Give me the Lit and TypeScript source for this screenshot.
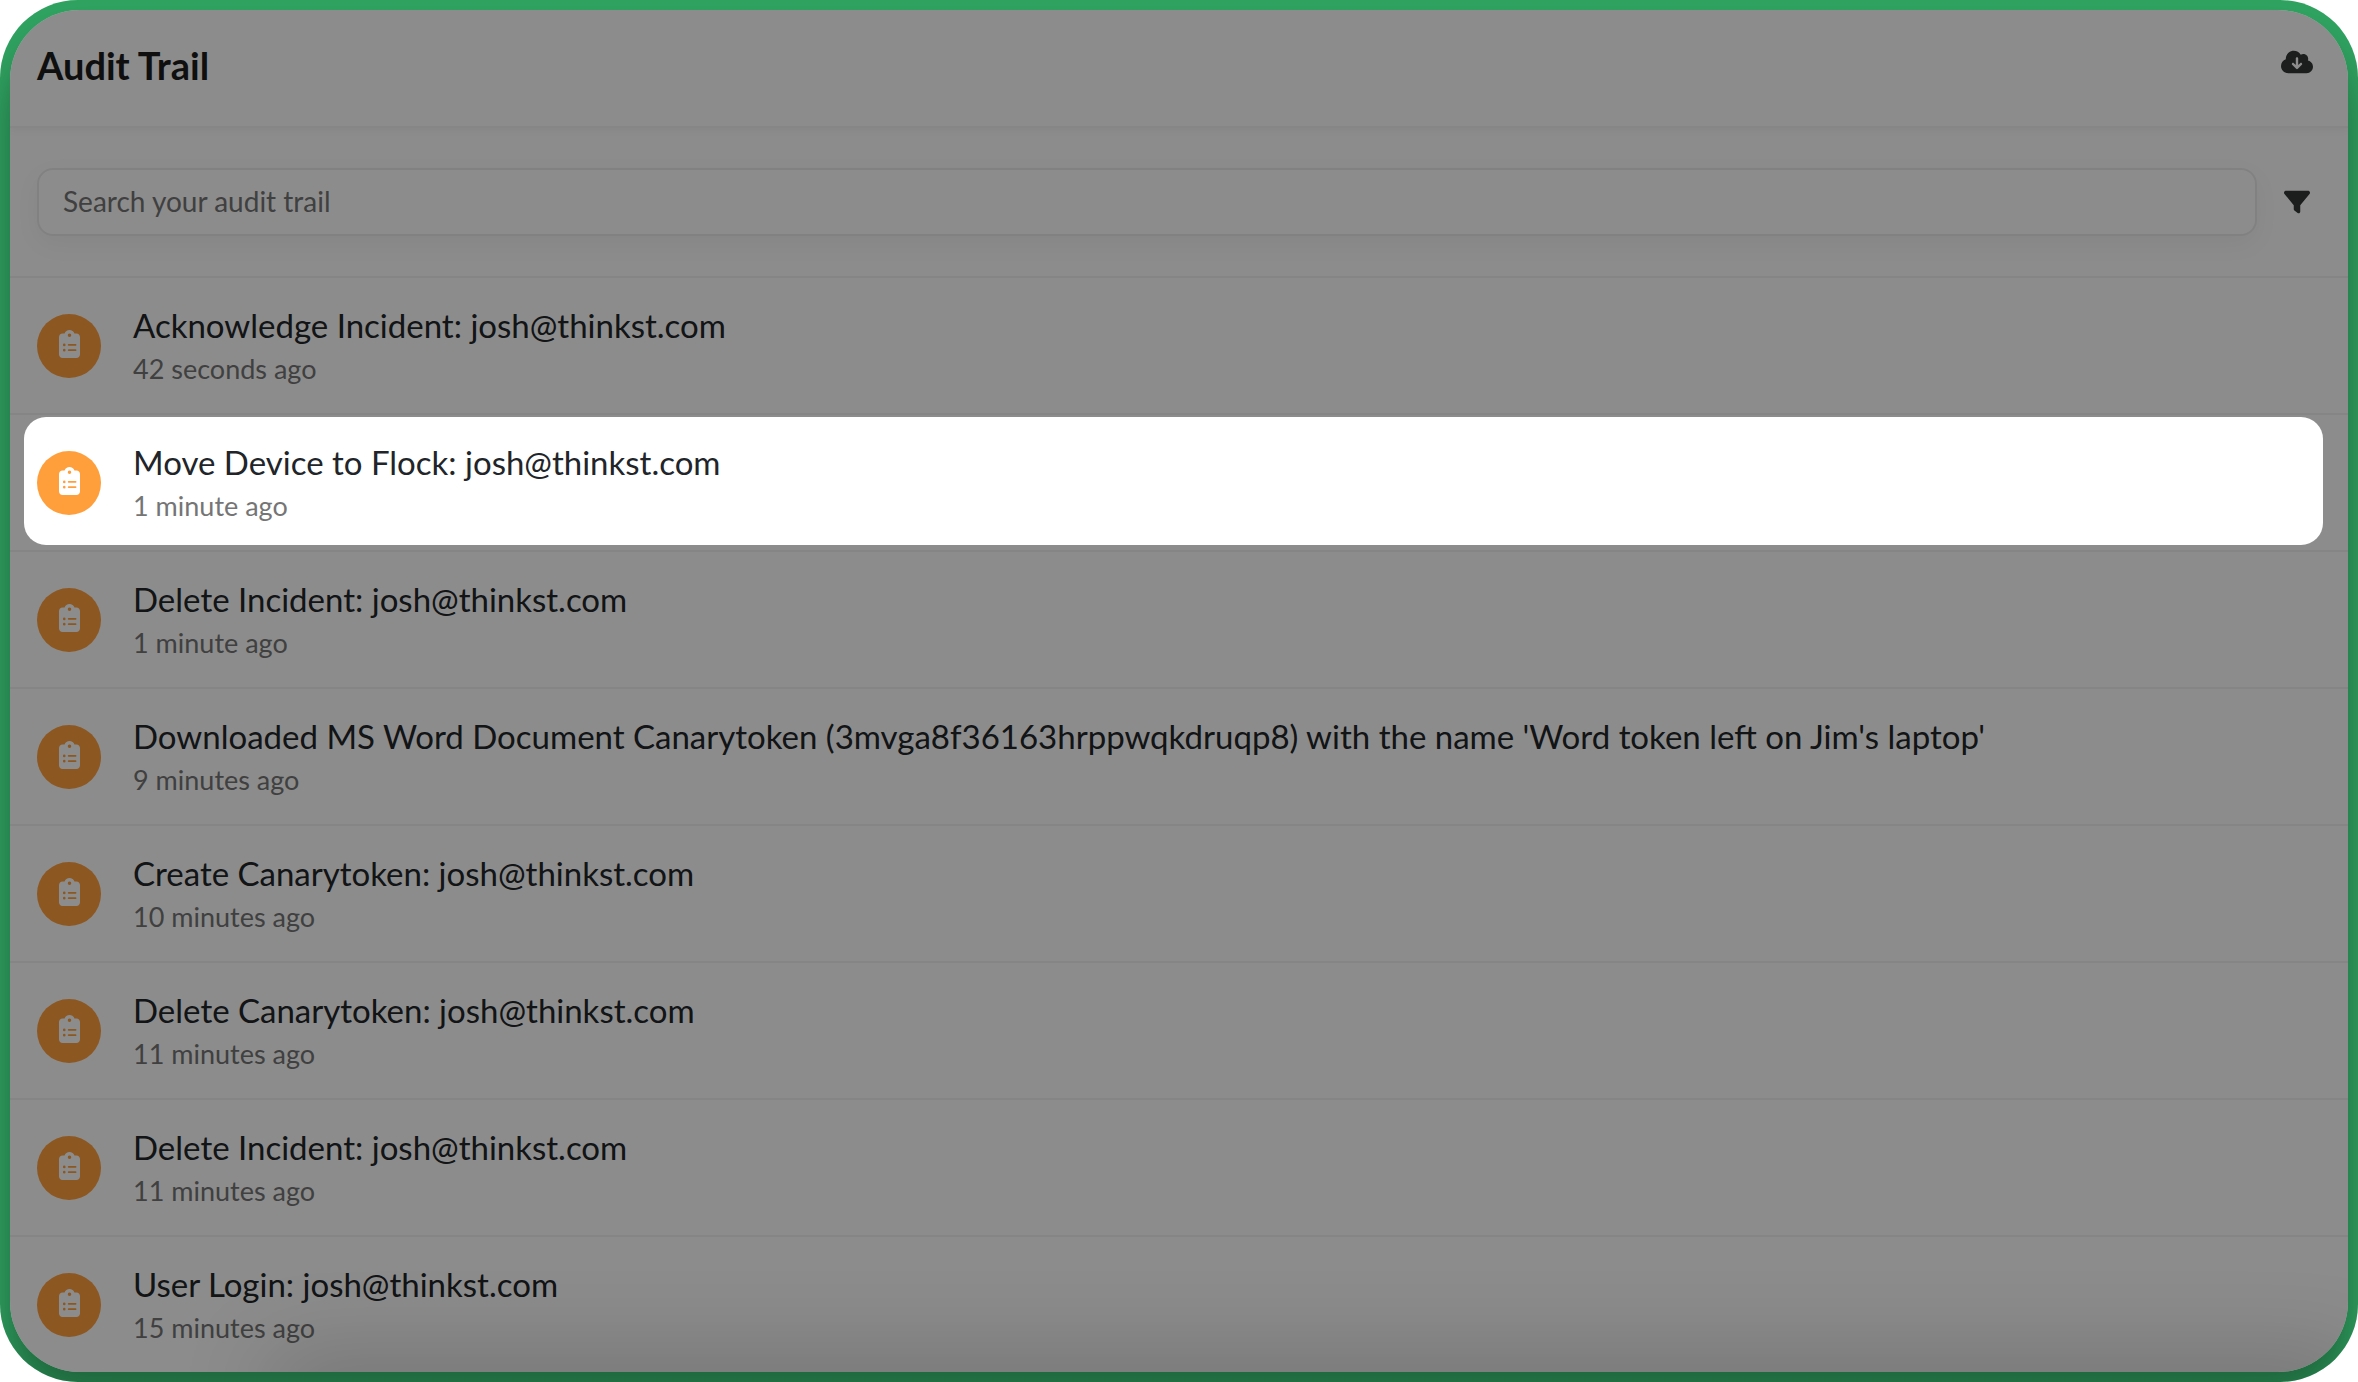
import { LitElement, html, css, svg } from "lit";
import { customElement, property } from "lit/decorators.js";
import { classMap } from "lit/directives/class-map.js";

interface AuditEvent {
  title: string;
  time: string;
  spotlit?: boolean;
}

const EVENTS: AuditEvent[] = [
  { title: "Acknowledge Incident: josh@thinkst.com", time: "42 seconds ago" },
  { title: "Move Device to Flock: josh@thinkst.com", time: "1 minute ago", spotlit: true },
  { title: "Delete Incident: josh@thinkst.com", time: "1 minute ago" },
  {
    title: "Downloaded MS Word Document Canarytoken (3mvga8f36163hrppwqkdruqp8) with the name 'Word token left on Jim's laptop'",
    time: "9 minutes ago",
  },
  { title: "Create Canarytoken: josh@thinkst.com", time: "10 minutes ago" },
  { title: "Delete Canarytoken: josh@thinkst.com", time: "11 minutes ago" },
  { title: "Delete Incident: josh@thinkst.com", time: "11 minutes ago" },
  { title: "User Login: josh@thinkst.com", time: "15 minutes ago" },
];

const cloudPath = svg`<path d="M144 480C64.5 480 0 415.5 0 336c0-62.8 40.2-116.2 96.2-135.9c-.1-2.7-.2-5.4-.2-8.1c0-88.4 71.6-160 160-160c59.3 0 111 32.2 138.7 80.2C409.9 102 428.3 96 448 96c53 0 96 43 96 96c0 12.2-2.3 23.8-6.4 34.6C596 238.4 640 290.1 640 352c0 70.7-57.3 128-128 128H144zm79-167l80 80c9.4 9.4 24.6 9.4 33.9 0l80-80c9.4-9.4 9.4-24.6 0-33.9s-24.6-9.4-33.9 0l-39 39V184c0-13.3-10.7-24-24-24s-24 10.7-24 24V318.1l-39-39c-9.4-9.4-24.6-9.4-33.9 0s-9.4 24.6 0 33.9z"/>`;
const filterPath = svg`<path d="M3.9 54.9C10.5 40.9 24.5 32 40 32H472c15.5 0 29.5 8.9 36.1 22.9s4.6 30.5-5.2 42.5L320 320.9V448c0 12.1-6.8 23.2-17.7 28.6s-23.8 4.3-33.5-3l-64-48c-8.1-6-12.8-15.5-12.8-25.6V320.9L9 97.3C-.7 85.4-2.8 68.8 3.9 54.9z"/>`;
const clipboardPath = svg`<path d="M192 0c-41.8 0-77.4 26.7-90.5 64H64C28.7 64 0 92.7 0 128V448c0 35.3 28.7 64 64 64H320c35.3 0 64-28.7 64-64V128c0-35.3-28.7-64-64-64H282.5C269.4 26.7 233.8 0 192 0zm0 64a32 32 0 1 1 0 64 32 32 0 1 1 0-64zM72 272a24 24 0 1 1 48 0 24 24 0 1 1 -48 0zm104-16H304c8.8 0 16 7.2 16 16s-7.2 16-16 16H176c-8.8 0-16-7.2-16-16s7.2-16 16-16zM72 368a24 24 0 1 1 48 0 24 24 0 1 1 -48 0zm88 0c0-8.8 7.2-16 16-16H304c8.8 0 16 7.2 16 16s-7.2 16-16 16H176c-8.8 0-16-7.2-16-16z"/>`;

@customElement("audit-row")
class AuditRow extends LitElement {
  @property({ attribute: false }) event!: AuditEvent;

  static styles = css`
    :host {
      display: block;
    }
    .row {
      display: flex;
      align-items: flex-start;
      gap: 32px;
      padding: 27px;
      border-top: 2px solid #f2f2f2;
      position: relative;
    }
    /* The lit row punches a hole in the dimming layer, which its own shadow paints. */
    .spotlit::after {
      content: "";
      position: absolute;
      inset: 2px 25px 5px 14px;
      border-radius: 22px;
      box-shadow: 0 0 0 4000px rgba(0, 0, 0, 0.45);
      pointer-events: none;
      z-index: 5;
    }
    .badge {
      flex: none;
      display: flex;
      align-items: center;
      justify-content: center;
      box-sizing: border-box;
      width: 64px;
      height: 64px;
      margin-top: 9px;
      padding-bottom: 4px;
      border-radius: 50%;
      background: #ff9f3c;
    }
    .badge svg {
      width: 21px;
      height: 28px;
      fill: #fff;
    }
    .title {
      margin: 0;
      font-size: 33px;
      line-height: 40px;
      font-weight: 400;
      color: #212529;
    }
    .time {
      display: block;
      margin-top: 7px;
      font-size: 27px;
      line-height: 34px;
      color: #757575;
    }
  `;

  render() {
    return html`
      <article class=${classMap({ row: true, spotlit: !!this.event.spotlit })}>
        <span class="badge">
          <svg viewBox="0 0 384 512" aria-hidden="true">${clipboardPath}</svg>
        </span>
        <div>
          <h2 class="title">${this.event.title}</h2>
          <time class="time">${this.event.time}</time>
        </div>
      </article>
    `;
  }
}

@customElement("app-root")
class AppRoot extends LitElement {
  static styles = css`
    :host {
      display: block;
      background: #fff;
      font-family: Lato, "Noto Sans", sans-serif;
    }
    .frame {
      display: flex;
      box-sizing: border-box;
      min-height: 100vh;
      padding: 10px;
      border-radius: 78px;
      overflow: hidden;
      background: #30a361;
    }
    .panel {
      flex: 1;
      min-width: 0;
      position: relative;
      overflow: hidden;
      border-radius: 70px;
      background: #fff;
      box-shadow: 0 32px 40px rgba(0, 0, 0, 0.36);
    }
    .panel::after {
      content: "";
      position: absolute;
      left: 270px;
      right: 0;
      top: 100%;
      height: 40px;
      box-shadow: 0 0 90px 10px rgba(0, 0, 0, 0.22);
      pointer-events: none;
      z-index: 6;
    }
    .header {
      display: flex;
      align-items: flex-start;
      justify-content: space-between;
      padding: 32px 35px 38px 27px;
      border-bottom: 2px solid #f4f4f4;
      box-shadow: 0 2px 8px rgba(0, 0, 0, 0.05);
    }
    .heading {
      margin: 0;
      font-size: 38px;
      line-height: 46px;
      font-weight: 700;
      color: #1c1c1c;
    }
    .icon-button {
      flex: none;
      display: flex;
      align-items: center;
      justify-content: center;
      width: 32px;
      height: 40px;
      padding: 0;
      border: 0;
      background: none;
      color: #343836;
    }
    .icon-button svg {
      fill: currentColor;
    }
    .cloud {
      width: 32px;
      height: 24px;
    }
    .funnel {
      width: 26px;
      height: 26px;
    }
    .search {
      display: flex;
      align-items: center;
      gap: 24px;
      padding: 40px 35px 40px 27px;
    }
    .search-box {
      flex: 1;
      min-width: 0;
      box-sizing: border-box;
      height: 68px;
      padding: 0 24px 2px;
      border: 2px solid #ececec;
      border-radius: 16px;
      background: #fff;
      font-family: inherit;
      font-size: 28px;
      color: #212529;
      box-shadow: 0 8px 24px rgba(0, 0, 0, 0.05);
      outline: none;
    }
    .search-box::placeholder {
      color: #757575;
      opacity: 1;
    }
  `;

  render() {
    return html`
      <div class="frame">
        <main class="panel">
          <header class="header">
            <h1 class="heading">Audit Trail</h1>
            <button class="icon-button" type="button" aria-label="Download audit trail">
              <svg class="cloud" viewBox="0 16 640 480" aria-hidden="true">${cloudPath}</svg>
            </button>
          </header>
          <form class="search" role="search">
            <input class="search-box" type="text" aria-label="Search your audit trail" placeholder="Search your audit trail" />
            <button class="icon-button" type="button" aria-label="Filter">
              <svg class="funnel" viewBox="0 0 512 512" aria-hidden="true">${filterPath}</svg>
            </button>
          </form>
          <section aria-label="Events">
            ${EVENTS.map((event) => html`<audit-row .event=${event}></audit-row>`)}
          </section>
        </main>
      </div>
    `;
  }
}
